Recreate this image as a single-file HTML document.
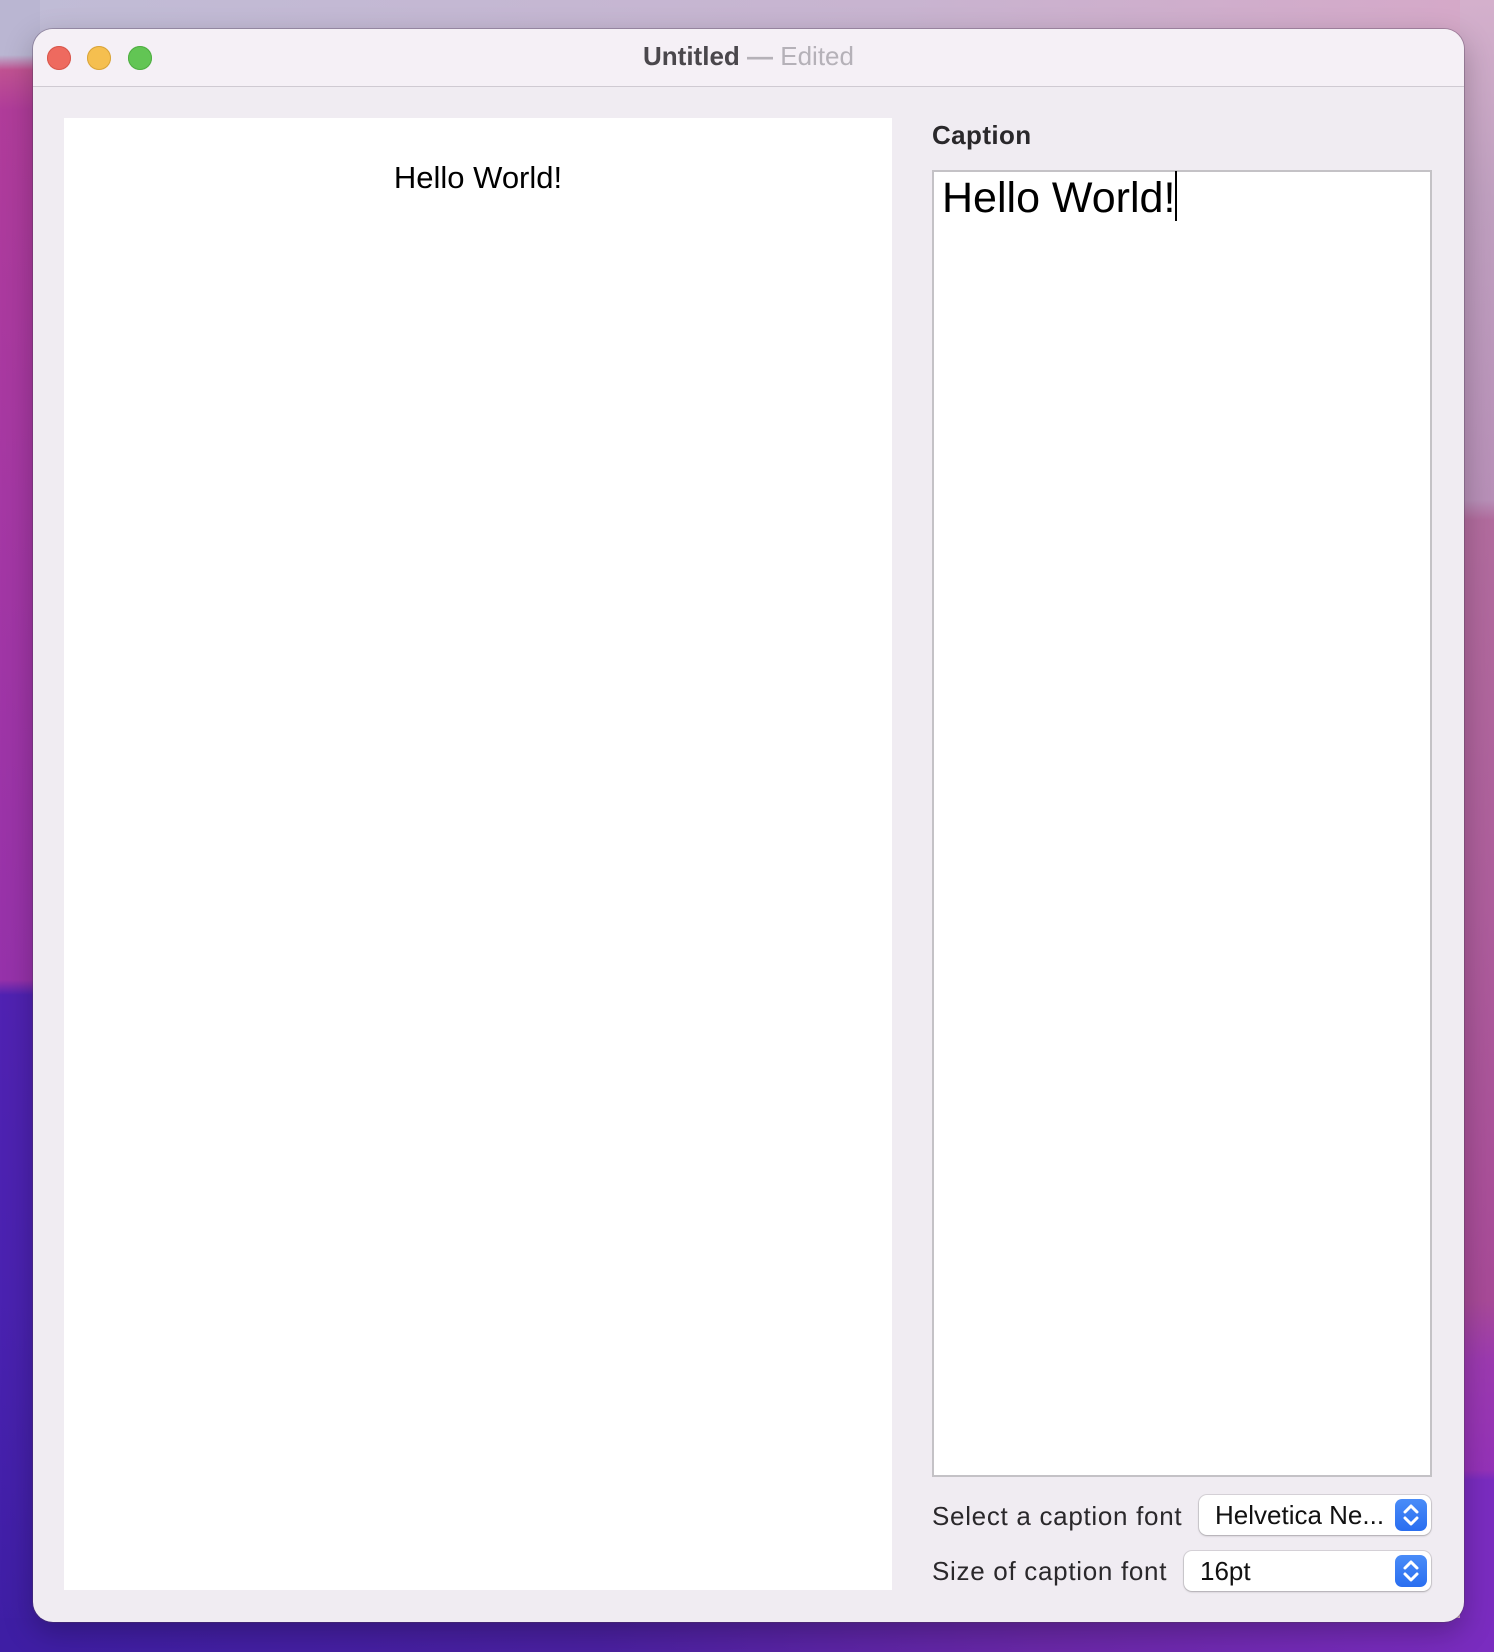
<!DOCTYPE html>
<html><head><meta charset="utf-8"><style>
*{margin:0;padding:0;box-sizing:border-box}
html,body{width:1494px;height:1652px;overflow:hidden}
body{position:relative;font-family:"Liberation Sans",sans-serif;background:linear-gradient(90deg,#c0bcd6 0%,#c8b4d0 60%,#d6a8c8 100%)}
.bg{position:absolute}
.win{position:absolute;left:33px;top:29px;width:1431px;height:1593px;border-radius:20px;background:#f0ecf2;overflow:hidden;box-shadow:0 0 0 1px rgba(80,60,90,0.35),0 10px 30px rgba(0,0,0,0.25)}
.tb{position:absolute;left:0;top:0;width:100%;height:58px;background:#f5f0f6;border-bottom:1px solid #cfcad2}
.l{position:absolute;top:17px;width:24px;height:24px;border-radius:50%}
.title{position:absolute;left:0;right:0;top:12px;text-align:center;font-size:26px;font-weight:bold;color:#4a474c}
.title span{color:#b5b1b8;font-weight:normal}
.title em{font-style:normal;color:#b5b1b8;font-weight:bold}
.doc{position:absolute;left:31px;top:89px;width:828px;height:1472px;background:#fff}
.doc div{position:absolute;left:0;right:0;top:42px;text-align:center;font-size:31px;color:#000}
.cap{position:absolute;left:899px;top:91px;font-size:26px;font-weight:bold;color:#2a282b;letter-spacing:0.4px}
.tv{position:absolute;left:899px;top:141px;width:500px;height:1307px;background:#fff;border:2px solid #c4c2c6}
.tv span{position:absolute;left:8px;top:-1px;font-size:43px;color:#000;white-space:nowrap}
.tv i{display:inline-block;width:2px;height:50px;background:#000;vertical-align:-9px}
.lab{position:absolute;left:899px;font-size:26px;color:#2a282b;letter-spacing:0.7px}
.pop{position:absolute;height:40px;background:#fff;border-radius:8px;box-shadow:0 0 0 1px rgba(0,0,0,0.1),0 1px 2px rgba(0,0,0,0.2);font-size:26px;color:#111}
.pop span{position:absolute;left:16px;top:5px;white-space:nowrap}
.pop b{position:absolute;right:4px;top:4px;width:32px;height:32px;border-radius:7px;background:linear-gradient(#4a8cf8,#2a6ef0)}
</style></head><body>
<div class="bg" style="left:0;top:0;width:40px;height:1652px;background:linear-gradient(180deg,#bab6d2 0px,#bab6d2 55px,#c05292 70px,#b03c9a 110px,#a538a4 500px,#9632aa 980px,#5022b2 995px,#4a22b0 1300px,#3e1ea4 1652px)"></div>
<div class="bg" style="left:1460px;top:0;width:34px;height:1652px;background:linear-gradient(180deg,#d4b0cc 0px,#c0a0c0 200px,#b890b8 500px,#b26c9e 520px,#ae5e9c 900px,#a84a98 1300px,#9c3ab0 1360px,#9432b8 1470px,#7a2cc0 1480px,#7a2cc0 1652px)"></div>
<div class="bg" style="left:0;top:1618px;width:1494px;height:34px;background:linear-gradient(90deg,#3e1ea4 0%,#4a20a0 40%,#6a28a8 70%,#7a2cc0 100%)"></div>
<div class="win">
<div class="tb">
<div class="l" style="left:14px;background:#ee6a5f;box-shadow:inset 0 0 0 1px #d8574c"></div>
<div class="l" style="left:54px;background:#f5bf4f;box-shadow:inset 0 0 0 1px #d9a43a"></div>
<div class="l" style="left:95px;background:#62c554;box-shadow:inset 0 0 0 1px #4fae42"></div>
<div class="title">Untitled <em>—</em> <span>Edited</span></div>
</div>
<div class="doc"><div>Hello World!</div></div>
<div class="cap">Caption</div>
<div class="tv"><span>Hello World!<i></i></span></div>
<div class="lab" style="top:1472px">Select a caption font</div>
<div class="pop" style="left:1166px;top:1466px;width:232px"><span>Helvetica Ne...</span><b><svg width="32" height="32" viewBox="0 0 32 32"><path d="M10 13l6-6 6 6M10 19l6 6 6-6" stroke="#fff" stroke-width="3" fill="none" stroke-linecap="round" stroke-linejoin="round"/></svg></b></div>
<div class="lab" style="top:1527px">Size of caption font</div>
<div class="pop" style="left:1151px;top:1522px;width:247px"><span>16pt</span><b><svg width="32" height="32" viewBox="0 0 32 32"><path d="M10 13l6-6 6 6M10 19l6 6 6-6" stroke="#fff" stroke-width="3" fill="none" stroke-linecap="round" stroke-linejoin="round"/></svg></b></div>
</div>
</body></html>
